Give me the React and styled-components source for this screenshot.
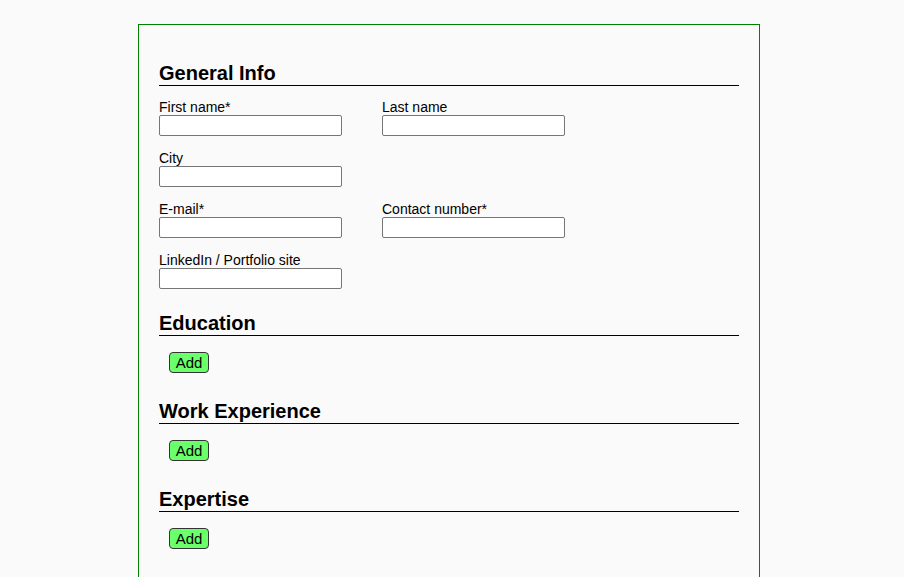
import React from "react"
import styled, { createGlobalStyle } from "styled-components"

const GlobalStyle = createGlobalStyle`
  html, body {
    margin: 0;
    padding: 0;
    background: #fafafa;
    overflow: hidden;
  }
  body {
    font-family: "Liberation Sans", Arial, sans-serif;
    color: #000;
  }
`

const Page = styled.div`
  padding-top: 24px;
  padding-left: 138px;
`

const Sheet = styled.form`
  width: 580px;
  min-height: 515px;
  border: 1px solid #008000;
  padding: 37px 20px 0;
  display: flex;
  flex-direction: column;
  gap: 23px;
`

const Section = styled.section`
  display: flex;
  flex-direction: column;
  padding-bottom: ${p => p.$tail || 0}px;
`

const Heading = styled.h2`
  margin: 0;
  font-size: 20px;
  line-height: 23px;
  font-weight: bold;
  border-bottom: 1px solid #000;
`

const FieldGrid = styled.div`
  display: grid;
  grid-template-columns: 183px 183px;
  column-gap: 40px;
  row-gap: 14px;
  margin-top: 13px;
`

const Field = styled.label`
  display: flex;
  flex-direction: column;
  grid-column: ${p => p.$col || "auto"};
  font-size: 14px;
  line-height: 16px;
`

const Input = styled.input`
  box-sizing: border-box;
  width: 183px;
  height: 21px;
  margin: 0;
  padding: 1px 3px;
  border: 1px solid #767676;
  border-radius: 2px;
  background: #fff;
  font-family: inherit;
  font-size: 13px;
`

const AddButton = styled.button`
  align-self: flex-start;
  box-sizing: border-box;
  width: 40px;
  height: 21px;
  margin: 16px 0 0 10px;
  padding: 0;
  border: 1px solid #333;
  border-radius: 4px;
  background: #6bff6b;
  color: #000;
  font-family: inherit;
  font-size: 15px;
  line-height: 17px;
  text-align: center;
  cursor: pointer;
`

const fields = [
  { label: "First name*", col: 1 },
  { label: "Last name", col: 2 },
  { label: "City", col: 1 },
  { label: "E-mail*", col: 1 },
  { label: "Contact number*", col: 2 },
  { label: "LinkedIn / Portfolio site", col: 1 },
]

const lists = ["Education", "Work Experience", "Expertise"]

export default function App() {
  return (
    <Page>
      <GlobalStyle />
      <Sheet onSubmit={e => e.preventDefault()}>
        <Section>
          <Heading>General Info</Heading>
          <FieldGrid>
            {fields.map(f => (
              <Field key={f.label} $col={f.col}>
                {f.label}
                <Input type="text" />
              </Field>
            ))}
          </FieldGrid>
        </Section>
        {lists.map(title => (
          <Section key={title} $tail={4}>
            <Heading>{title}</Heading>
            <AddButton type="button">Add</AddButton>
          </Section>
        ))}
      </Sheet>
    </Page>
  )
}
